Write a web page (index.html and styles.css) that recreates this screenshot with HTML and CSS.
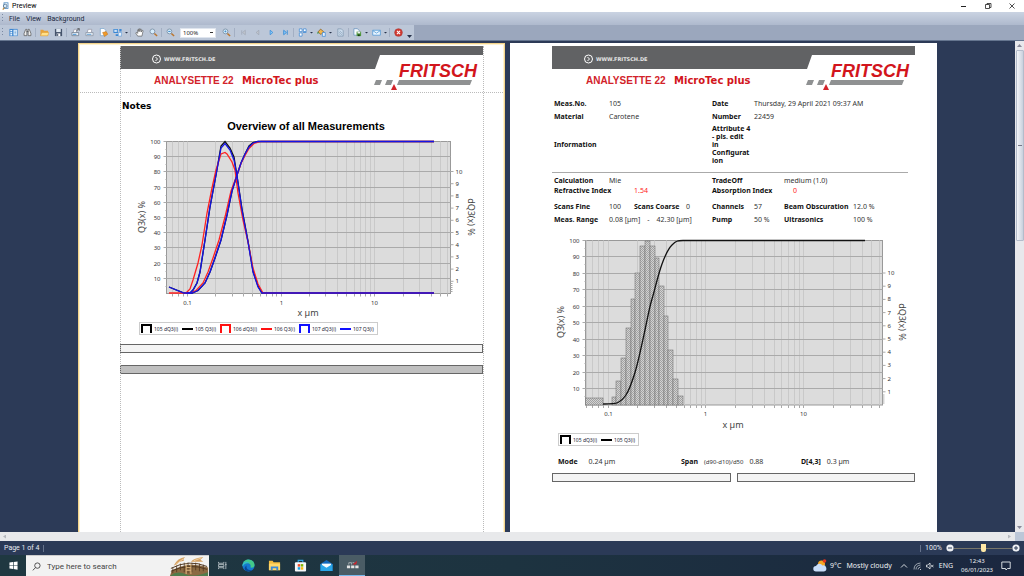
FILE: index.html
```html
<!DOCTYPE html>
<html lang="en">
<head>
<meta charset="utf-8">
<title>Preview</title>
<link rel="stylesheet" href="styles.css">
</head>
<body>
<header class="titlebar">
  <svg class="app-icon" viewBox="0 0 10 10"><rect x="2.500" y="1" width="5" height="7" fill="#fff" stroke="#4b8ac2"/><circle cx="4" cy="5" r="2.300" fill="#d8ecfa" stroke="#4c6f91"/><path d="M3 7 1 9.500" stroke="#c68e3b" stroke-width="1.500"/></svg>
  <h1 class="app-title">Preview</h1>
  <button class="win-btn" aria-label="Minimize"><svg viewBox="0 0 8 8"><path d="M1 4.500h5" stroke="#222"/></svg></button>
  <button class="win-btn" aria-label="Restore"><svg viewBox="0 0 8 8"><path d="M1.500 2.500h4v4h-4zM3 2.500v-1h4v4h-1.500" fill="none" stroke="#222" stroke-width=".8"/></svg></button>
  <button class="win-btn" aria-label="Close"><svg viewBox="0 0 8 8"><path d="m1.500 1.500 5 5m0-5-5 5" stroke="#222" stroke-width=".8"/></svg></button>
</header>

<nav class="menubar">
  <i class="grip"></i>
  <button class="menu">File</button><button class="menu">View</button><button class="menu">Background</button>
</nav>

<div class="toolrow">
  <div class="toolbar" role="toolbar" aria-label="Preview tools">
    <i class="grip"></i>
    <button class="tool" aria-label="Thumbnails"><svg viewBox="0 0 10 10"><rect x=".5" y="1" width="9" height="8" fill="#3f86cf"/><path d="M1.500 2.200h2v1.500h-2zm0 2.300h2V6h-2zm0 2.200h2v1.500h-2zM5 2h3.800v6.200H5z" fill="#e5f2fd"/><path d="M6 3.500h2M6 5h2M6 6.500h2" stroke="#5b99d5" stroke-width=".7"/></svg></button>
    <button class="tool" aria-label="Find"><svg viewBox="0 0 10 10"><path d="M3 1.500h1.300v7H1.200V6zM7 1.500H5.700v7h3.100V6z" fill="#eee" stroke="#555" stroke-width=".8"/><path d="M4 4h2" stroke="#555"/></svg></button>
    <i class="sep"></i>
    <button class="tool" aria-label="Open"><svg viewBox="0 0 10 10"><path d="M.5 2h3l1 1H9v5.500H.5z" fill="#e6a23c"/><path d="M2 5h8L8.500 8.700H.6z" fill="#ffe08a" stroke="#dc962c" stroke-width=".5"/></svg></button>
    <button class="tool" aria-label="Save"><svg viewBox="0 0 10 10"><path d="M1 1h8v8H1z" fill="#45536b"/><path d="M2.500 1h5v3.500h-5z" fill="#dfe7f0"/><path d="M3 6h4v3H3z" fill="#fff"/><path d="M3.500 6.500h1.200V9H3.500z" fill="#45536b"/></svg></button>
    <i class="sep"></i>
    <button class="tool" aria-label="Print options"><svg viewBox="0 0 10 10"><path d="m2.500 5 1-3.500h3L6 5" fill="#fff" stroke="#889" stroke-width=".7"/><path d="M1 5h7.500v3.500H1z" fill="#e8edf3" stroke="#5d6a7c" stroke-width=".7"/><path d="M6 3.500 9 .5M7 .8h2.200V3" stroke="#444" stroke-width=".8" fill="none"/><path d="M2 7h4" stroke="#2f88d2"/></svg></button>
    <button class="tool" aria-label="Print"><svg viewBox="0 0 10 10"><path d="m2.500 5 1-3.500h4L7 5" fill="#fff" stroke="#889" stroke-width=".7"/><path d="M1 5h8v3.500H1z" fill="#e8edf3" stroke="#7d8898" stroke-width=".7"/><path d="M2 7h5" stroke="#5297d0"/></svg></button>
    <button class="tool" aria-label="Page setup"><svg viewBox="0 0 10 10"><path d="M1.500.5h4l2 2v6h-6z" fill="#fff" stroke="#679bc9" stroke-width=".7"/><path d="m4 5 4-1 1.800 3L6 9.500z" fill="#f09a2a" stroke="#b86b15" stroke-width=".5"/></svg></button>
    <button class="tool" aria-label="Scale"><svg viewBox="0 0 10 10"><path d="M.5 1h5v4.500h-5zM7 1h2.500v3H7zM3 7h3v2H3z" fill="#3c88d4"/><path d="M1.200 2h3.500v2.500H1.200zM6 5h3.500v4H6z" fill="#e7f2fd" stroke="#3c88d4" stroke-width=".5"/></svg></button>
    <i class="drop"></i><i class="sep"></i>
    <button class="tool" aria-label="Hand tool"><svg viewBox="0 0 10 10"><path d="M3 9 .8 5.500 2 4.800 3 6V2h1.200v2V1h1.200v3l.3-2.700h1.200V4.500L8 2.500l1 .5-1.300 6z" fill="#fff" stroke="#555" stroke-width=".7"/></svg></button>
    <button class="tool" aria-label="Magnifier"><svg viewBox="0 0 10 10"><circle cx="3.800" cy="3.800" r="2.700" fill="#d6edfc" stroke="#7e93a8"/><path d="m6 6 3 3" stroke="#bc762c" stroke-width="1.600"/></svg></button>
    <i class="sep"></i>
    <button class="tool" aria-label="Zoom out"><svg viewBox="0 0 10 10"><circle cx="3.800" cy="3.800" r="2.700" fill="#d6edfc" stroke="#7e93a8"/><path d="M2.500 3.800h2.600" stroke="#287bc1"/><path d="m6 6 3 3" stroke="#bc762c" stroke-width="1.600"/></svg></button>
    <select class="zoom-select" aria-label="Zoom"><option>100%</option></select>
    <button class="tool" aria-label="Zoom in"><svg viewBox="0 0 10 10"><circle cx="3.800" cy="3.800" r="2.700" fill="#d6edfc" stroke="#7e93a8"/><path d="M2.700 3.800h2.200M3.800 2.700v2.200" stroke="#287bc1" stroke-width=".7"/><path d="m6 6 3 3" stroke="#bc762c" stroke-width="1.600"/></svg></button>
    <i class="sep"></i>
    <button class="tool" aria-label="First page" disabled><svg viewBox="0 0 10 10"><path d="M3 2.500v5M7 2.500v5L4 5z" fill="#c2c7cf" stroke="#9ba3af" stroke-width=".7"/></svg></button>
    <button class="tool" aria-label="Previous page" disabled><svg viewBox="0 0 10 10"><path d="M6.500 2.500v5L3.500 5z" fill="#c2c7cf" stroke="#9ba3af" stroke-width=".7"/></svg></button>
    <button class="tool" aria-label="Next page"><svg viewBox="0 0 10 10"><path d="M3.500 2.500v5l3-2.500z" fill="#8dcdfb" stroke="#2f87d5" stroke-width=".8"/></svg></button>
    <button class="tool" aria-label="Last page"><svg viewBox="0 0 10 10"><path d="M3 2.500v5L6 5zM7 2.500v5" fill="#8dcdfb" stroke="#2f87d5" stroke-width=".9"/></svg></button>
    <i class="sep"></i>
    <button class="tool" aria-label="Multiple pages"><svg viewBox="0 0 10 10"><path d="M1.500 1h3v3h-3zm4.500 0h3v3H6zM1.500 5.500h3V9h-3z" fill="#fff" stroke="#3b89d6" stroke-width=".8"/><path d="M5.300 4.800h4" stroke="#3b89d6"/></svg></button>
    <i class="drop"></i>
    <button class="tool" aria-label="Background colour"><svg viewBox="0 0 10 10"><path d="m1 4.500 3-3.300 3.500 3-3 3z" fill="#f4b74c" stroke="#7c5b25" stroke-width=".8"/><path d="M6 5h3.200v4.300H6z" fill="#e5f1fc" stroke="#3b89d6" stroke-width=".8"/><path d="M1 4.500v2" stroke="#2b9c45"/></svg></button>
    <i class="drop"></i>
    <button class="tool" aria-label="Watermark"><svg viewBox="0 0 10 10"><path d="M2 1h4l2 2v6H2z" fill="#ccdced" stroke="#7890a9" stroke-width=".7"/><path d="m3 4 4 4M3 6l2 2m-1-5 3 3" stroke="#7890a9" stroke-width=".6"/></svg></button>
    <i class="sep"></i>
    <button class="tool" aria-label="Export"><svg viewBox="0 0 10 10"><path d="M1 .8h4L7 3v5H1z" fill="#f6fbff" stroke="#5284b5" stroke-width=".7"/><path d="M4 4h5v5H4z" fill="#4d943b"/><path d="M5 4h3v2H5z" fill="#eee"/><path d="M5.500 7.200h2V9h-2z" fill="#163b12"/></svg></button>
    <i class="drop"></i>
    <button class="tool" aria-label="Send by e-mail"><svg viewBox="0 0 10 10"><path d="M.8 2.500h8.500v5.500H.8z" fill="#e9f5ff" stroke="#4693d4" stroke-width=".8"/><path d="m1 3 4 2.700L9 3" fill="none" stroke="#4693d4" stroke-width=".8"/></svg></button>
    <i class="drop"></i><i class="sep"></i>
    <button class="tool" aria-label="Close preview"><svg viewBox="0 0 10 10"><circle cx="5" cy="5" r="4.300" fill="#d23a32" stroke="#a63631" stroke-width=".6"/><path d="m3.300 3.300 3.400 3.400m0-3.400L3.300 6.700" stroke="#fff" stroke-width="1.200"/></svg></button>
    <i class="overflow"></i>
  </div>
</div>

<main class="workspace">
  <div class="canvas">
    <article class="page page-selected">
      <i class="guide guide-left"></i><i class="guide guide-right"></i><i class="guide guide-top"></i>
      <svg class="banner" viewBox="0 0 363 46">
        <path d="M0 0H363V9H260L255 23H0Z" fill="#616264"/>
        <circle cx="36.500" cy="13" r="4" fill="none" stroke="#fff"/><path d="m35.500 11 2 2-2 2" fill="none" stroke="#fff"/>
        <text class="site" x="44" y="15">WWW.FRITSCH.DE</text>
        <text class="model" x="34" y="38">ANALYSETTE 22</text>
        <text class="model-name" x="122" y="38">MicroTec plus</text>
        <text class="brand" x="279" y="31">FRITSCH</text>
        <path d="M279 34h73l-2 5h-73zM256 34h6l-2 5h-6zM267 34h6l-2 5h-6z" fill="#8f9192"/><path d="m274 38 3 6h-6z" fill="#d2232a"/>
      </svg>
      <h2 class="notes">Notes</h2>
      <svg class="chart chart-overview" id="overview" viewBox="120 116 363 206">
        <g class="plot"></g>
        <g class="curves">
          <path class="black" d="M169 287 184 293H190L193 290 197 283 200 272 205 240 210 207 216 175 221 146 225 141.500 230 148 234 157 237 176 242 209 248 241 253 271 258 286 262 293H434"/>
          <path class="black" d="M187 293H192L198 290.500 205 283 210 272 215 258 221 240 227 215 232 191 237 175 241 163 245 154 249 146 253 142.500 258 141.500H434"/>
          <path class="red" d="M169 293H186L190 289 193 280 198 263 202 245 207 213 212 188 216 170 221 154 225 152.500 227 154 232 162 235 170 238 193 243 220 248 242 253 268 258 284 263 293H434"/>
          <path class="red" d="M187 293H190L196 290.500 203 283 208 272 213 258 219 240 225.500 215 231 191 237 175 241 163.500 245 155.500 249 148.500 254 143.500 261 141.500H434"/>
          <path class="blue" d="M169 287 184 293H190L193 290 197 283 200 272 205 240 210 207 216 175 221 148 225 143.500 230 150 234 160 237 176 242 210 248 242 253 272 258 287 262 293H434"/>
          <path class="blue" d="M187 293H192L198 290.500 205 283 210 272 215 258 221 240 227 215 232 191 237 175 241 163 245 154 249 147 253 143 258 141.500H434"/>
        </g>
        <text class="chart-title" x="306" y="130">Overview of all Measurements</text>
        <text class="axis-title" x="308" y="316">x µm</text>
        <text class="axis-title" transform="translate(145 217) rotate(-90)">Q3(x) %</text>
        <text class="axis-title" transform="translate(468 217) rotate(90)">dQ3(x) %</text>
      </svg>
      <ul class="legend legend-overview">
        <li class="key"><i class="step"></i>105 dQ3(i)</li><li class="key"><i class="line"></i>105 Q3(i)</li>
        <li class="key"><i class="step is-red"></i>106 dQ3(i)</li><li class="key"><i class="line is-red"></i>106 Q3(i)</li>
        <li class="key"><i class="step is-blue"></i>107 dQ3(i)</li><li class="key"><i class="line is-blue"></i>107 Q3(i)</li>
      </ul>
      <div class="strip"></div>
      <div class="strip strip-dark"></div>
    </article>

    <article class="page">
      <svg class="banner" viewBox="0 0 363 46">
        <path d="M0 0H363V9H260L255 23H0Z" fill="#616264"/>
        <circle cx="36.500" cy="13" r="4" fill="none" stroke="#fff"/><path d="m35.500 11 2 2-2 2" fill="none" stroke="#fff"/>
        <text class="site" x="44" y="15">WWW.FRITSCH.DE</text>
        <text class="model" x="34" y="38">ANALYSETTE 22</text>
        <text class="model-name" x="122" y="38">MicroTec plus</text>
        <text class="brand" x="279" y="31">FRITSCH</text>
        <path d="M279 34h73l-2 5h-73zM256 34h6l-2 5h-6zM267 34h6l-2 5h-6z" fill="#8f9192"/><path d="m274 38 3 6h-6z" fill="#d2232a"/>
      </svg>
      <section class="fields fields-sample">
        <b>Meas.No.</b><span class="wide3">105</span><b>Date</b><span class="wide3">Thursday, 29 April 2021 09:37 AM</span>
        <b>Material</b><span class="wide3">Carotene</span><b>Number</b><span class="wide3">22459</span>
        <b class="wide4">Information</b><b class="attribute">Attribute 4<br>- pls. edit<br>in<br>Configurat<br>ion</b>
      </section>
      <section class="fields fields-optics">
        <b>Calculation</b><span class="wide3">Mie</span><b class="wide2">TradeOff</b><span class="wide2">medium (1.0)</span>
        <b class="wide2">Refractive Index</b><span class="wide2 is-value-red">1.54</span><b class="wide2">Absorption Index</b><span class="wide2 is-value-red indent">0</span>
      </section>
      <section class="fields fields-scan">
        <b>Scans Fine</b><span>100</span><b>Scans Coarse</b><span>0</span><b>Channels</b><span>57</span><b>Beam Obscuration</b><span>12.0 %</span>
        <b>Meas. Range</b><span class="wide3 range"><span>0.08 [µm]</span><span>-</span><span>42.30 [µm]</span></span><b>Pump</b><span>50 %</span><b>Ultrasonics</b><span>100 %</span>
      </section>
      <svg class="chart chart-single" id="single" viewBox="552 232 363 200">
        <defs><pattern id="mesh" width="2" height="2" patternUnits="userSpaceOnUse"><rect width="2" height="2" fill="#d2d2d2"/><path d="M0 0h1v1H0zM1 1h1v1H1z" fill="#a2a2a2"/></pattern></defs>
        <g class="plot"></g>
        <g class="bars"></g>
        <g class="curves"><path class="black" d="M603 404C612 404 615 404 618 402.500S624 398 626 395 632 382 635 372.500 642 344 645 330 649 309 652 299 658 275 662 264 668 249 672 245 677 240.500 683 240.500H865"/></g>
        <text class="axis-title" x="733" y="428">x µm</text>
        <text class="axis-title" transform="translate(564 322) rotate(-90)">Q3(x) %</text>
        <text class="axis-title" transform="translate(899 322) rotate(90)">dQ3(x) %</text>
      </svg>
      <ul class="legend legend-single">
        <li class="key"><i class="step"></i>105 dQ3(i)</li><li class="key"><i class="line"></i>105 Q3(i)</li>
      </ul>
      <div class="summary">
        <div class="stat stat-mode"><b>Mode</b><span>0.24 µm</span></div>
        <div class="stat"><b>Span</b><small>(d90-d10)/d50</small><span>0.88</span></div>
        <div class="stat"><b>D[4,3]</b><span>0.3 µm</span></div>
      </div>
      <div class="pair"><div class="strip"></div><div class="strip"></div></div>
    </article>
  </div>
  <div class="vscroll"><i class="arrow-up"></i><i class="thumb"></i><i class="arrow-down"></i></div>
</main>
<div class="hscroll"><i class="arrow-left"></i><i class="arrow-right"></i><i class="corner"></i></div>

<footer class="statusbar">
  <span class="page-count">Page 1 of 4</span>
  <label class="zoom-label" for="zoom">100%</label>
  <button class="round" aria-label="Zoom out"><svg viewBox="0 0 8 8"><circle cx="4" cy="4" r="3.600" fill="#eef0f4"/><path d="M2 4h4" stroke="#2b3a57"/></svg></button>
  <input class="zoom-range" id="zoom" type="range" min="0" max="100" value="50">
  <button class="round" aria-label="Zoom in"><svg viewBox="0 0 8 8"><circle cx="4" cy="4" r="3.600" fill="#eef0f4"/><path d="M2 4h4M4 2v4" stroke="#2b3a57"/></svg></button>
</footer>

<div class="taskbar">
  <button class="task" aria-label="Start"><svg viewBox="0 0 10 10"><path d="M.5 1.700 4.500 1.200V4.700H.5zM5.200 1.100 9.500.5V4.700H5.200zM.5 5.400H4.500V8.900L.5 8.400zM5.200 5.400H9.500V9.600L5.200 9z" fill="#fff"/></svg></button>
  <div class="search">
    <svg class="lens" viewBox="0 0 10 10"><circle cx="6" cy="4" r="3" fill="none" stroke="#333" stroke-width=".9"/><path d="M4 6.200.8 9.300" stroke="#333" stroke-width=".9"/></svg>
    <input class="search-input" type="text" aria-label="Search" placeholder="Type here to search">
    <svg class="scene" viewBox="0 0 40 21"><path d="M0 21 2 15Q20 5 40 12V21Z" fill="#8b6a42"/><path d="M0 21Q8 15 16 19T40 17V21Z" fill="#4f7d4c"/><path d="M1 13Q20 3 39 11M1 16Q20 7 39 14" fill="none" stroke="#4f3620"/><path d="M3 12v6M7 10v7M11 8v7M15 7v10M19 7v11M23 7v10M27 7v8M31 8v8M35 9v7" stroke="#4f3620" stroke-width=".8"/><path d="M17 8v11m5-11v11M17 12h5m-5 3h5" stroke="#dfb77f"/><path d="M4 10Q8 2 16 1 13 4 15 5L10 6 7 9M22 6Q25 2 35 1L32 4 35 6 27 6" fill="#d4a163"/><path d="M6 9 14 3M25 5 33 2" stroke="#f1d0a0"/></svg>
  </div>
  <button class="task" aria-label="Task view"><svg viewBox="0 0 10 10"><path d="M.5 1v1.500h6V1M.5 9V7.500h6V9M.5 4h6v2.200h-6zM8.700 1v8M8 4h1.500" fill="none" stroke="#d7dde1" stroke-width=".8"/></svg></button>
  <button class="task" aria-label="Edge"><svg class="big" viewBox="0 0 14 14"><circle cx="7" cy="7" r="6.500" fill="#1578cf"/><path d="M.7 6C1.500 2 4 .5 7 .5 11 .5 13.500 3.500 13.500 6.500 13.500 9 11 10 9 9 10 7 9 4.500 6 4.500 3 4.500 1.500 6 .7 8Z" fill="#43c98a"/><path d="M.7 6C2 2.500 6 2 9 4 6 3 2 4.500 .7 8Z" fill="#2eb6df"/><path d="M5 7C4 11 8 13 11.500 11.500 9.500 13.500 6 14 3.500 12 2 10.500 3 8 5 7Z" fill="#0a4796"/></svg></button>
  <button class="task" aria-label="File Explorer"><svg class="big" viewBox="0 0 14 14"><path d="M1 2h4l1 1.500h7V12H1z" fill="#f4bd3f"/><path d="M1 5h12v7H1z" fill="#ffd769"/><path d="M3 12V8h8v4H9v-2H5v2z" fill="#3a89d8"/></svg></button>
  <button class="task" aria-label="Store"><svg class="big" viewBox="0 0 14 14"><path d="M4.500 4V1.500h5V4" fill="none" stroke="#31a6e6" stroke-width="1.200"/><rect x="1" y="3.500" width="12" height="10" rx="1" fill="#f6f8fa"/><path d="M4 5.500h2.700v2.700H4z" fill="#ee4e2b"/><path d="M7.300 5.500H10v2.700H7.300z" fill="#7eb900"/><path d="M4 8.800h2.700v2.700H4z" fill="#1ba1e2"/><path d="M7.300 8.800H10v2.700H7.300z" fill="#fdb813"/></svg></button>
  <button class="task" aria-label="Mail"><svg class="big" viewBox="0 0 14 14"><path d="m.5 5.500 6.500-4.500 6.500 4.500V13H.5z" fill="#1168bd"/><path d="M2 5h10v5H2z" fill="#f4fbff"/><path d="M.5 5.500 7 9.500l6.500-4V13H.5z" fill="#28a5e8"/></svg></button>
  <button class="task task-active" aria-label="Measurement software"><svg class="big" viewBox="0 0 14 14"><path d="M1 7h3.500v3H1zm4.500 0H9v3H5.500zm4.500 0h3.500v3H10z" fill="#e4e4e4"/><path d="M3 6V4h3v2m1-2h2" stroke="#a9b0b3" fill="none"/><path d="m7 6 5-4-1 4z" fill="#d0232b"/></svg></button>
  <div class="tray">
    <svg class="weather" viewBox="0 0 14 13"><circle cx="8.500" cy="5" r="3.500" fill="#f5a623"/><circle cx="11.500" cy="2" r="1.800" fill="#e0331f"/><path d="M3 12.500a2.700 2.700 0 0 1 0-5.400A3.600 3.600 0 0 1 9.500 6.500 3 3 0 0 1 11 12.500z" fill="#c9defa"/></svg>
    <span class="forecast"><span>9°C</span><span>Mostly cloudy</span></span>
    <svg class="tray-icon" viewBox="0 0 8 8"><path d="m1 5.500 3-3 3 3" fill="none" stroke="#e7ebee" stroke-width=".9"/></svg>
    <svg class="tray-icon" viewBox="0 0 8 8"><path d="M1 7.500Q1 1.500 7.500 1M3 7.500Q3 3.500 7.500 3M5 7.500Q5 5.500 7.500 5" fill="none" stroke="#bcc4cb" stroke-width=".8"/><path d="M7 7.500h.8" stroke="#fff"/></svg>
    <svg class="tray-icon" viewBox="0 0 8 8"><path d="M.5 3h1.300L4 1v6L1.800 5H.5zM5 2.800l2.500 2.500m0-2.500L5 5.300" fill="none" stroke="#e7ebee" stroke-width=".8"/></svg>
    <span class="lang">ENG</span>
    <time class="clock">12:43<br>06/01/2023</time>
    <svg class="notify" viewBox="0 0 10 10"><path d="M.8 1h8.400v6.500H6.500L5 9 4.500 7.500H.8z" fill="none" stroke="#e7ebee" stroke-width=".9"/></svg>
  </div>
</div>
<script src="charts.js"></script>
</body>
</html>
```

FILE: styles.css
```css
* { box-sizing: border-box; }
body {
  margin: 0; height: 100vh; display: flex; flex-direction: column; overflow: hidden;
  font-family: Roboto, "Noto Sans", sans-serif; font-size: 7px; color: #222; background: #2c3a57;
}
button { border: 0; padding: 0; background: none; font: inherit; color: inherit; display: flex; align-items: center; justify-content: center; }
svg { display: block; }
ul { list-style: none; margin: 0; padding: 0; }

.titlebar { height: 12px; flex: none; display: flex; align-items: center; background: #fff; }
.app-icon { width: 8px; height: 8px; margin: 0 2px; }
.app-title { margin: 0; font-size: 7px; font-weight: 400; flex: 1; color: #000; }
.win-btn { width: 24px; height: 12px; }
.win-btn svg { width: 8px; height: 8px; }

.menubar { height: 13px; flex: none; display: flex; align-items: center; padding-left: 2px; background: linear-gradient(#cad3e2, #aeb9cd); }
.grip { width: 4px; height: 9px; background: repeating-linear-gradient(#7b8aa3 0 1px, transparent 1px 3px) 0 0 / 1px 100% no-repeat; }
.menu { height: 13px; padding: 0 3px; color: #1b293e; }

.toolrow { height: 16px; flex: none; background: #9ba7bd; border-bottom: 1px solid #65758f; }
.toolbar { width: max-content; height: 15px; display: flex; align-items: center; padding-left: 2px; background: #bcc7d8; }
.tool { width: 14px; height: 14px; }
.tool svg { width: 9px; height: 9px; }
.sep { width: 1px; height: 9px; margin: 0 1px; background: #a3afc3; }
.drop { width: 5px; height: 2px; background: #27324a; clip-path: polygon(10% 0, 90% 0, 50% 100%); }
.zoom-select {
  width: 36px; height: 10px; margin: 0 3px; padding: 0 2px; appearance: none; border: 1px solid #dfe5ee; border-radius: 0;
  font: 6px "Noto Sans", sans-serif; color: #222;
  background: #fff linear-gradient(#333, #333) right 2px center / 3px 1px no-repeat;
}
.overflow { align-self: end; width: 5px; height: 3px; margin: 0 2px 2px; background: #27324a; clip-path: polygon(0 0, 100% 0, 50% 100%); }

.workspace { flex: 1; min-height: 0; display: flex; }
.canvas { flex: 1; min-width: 0; overflow: hidden; display: flex; justify-content: center; gap: 5px; padding-top: 2px; background: #2c3a57; }
.page { position: relative; width: 427px; height: 603px; flex: none; display: flex; flex-direction: column; padding: 3px 22px 0 42px; background: #fff; font-family: "Noto Sans", sans-serif; }
.page-selected { box-shadow: inset 0 0 0 1px #f4d48c, inset 0 0 0 2px #fff3d0; }
.guide { position: absolute; border: 0 dotted #bbb; }
.guide-left { left: 42px; top: 3px; bottom: 0; border-left-width: 1px; }
.guide-right { right: 21px; top: 3px; bottom: 0; border-left-width: 1px; }
.guide-top { top: 49px; left: 2px; right: 2px; border-top-width: 1px; }

.banner { width: 100%; flex: none; }
.site { font: bold 5px "DejaVu Sans", sans-serif; fill: #e6e6e6; }
.model { font: bold 10px "Liberation Sans", sans-serif; fill: #d2232a; }
.model-name { font: bold 10px "DejaVu Sans", sans-serif; fill: #d2151c; }
.brand { font: italic bold 18px "Liberation Sans", sans-serif; fill: #d2151c; }

.notes { margin: 8px 0 0 2px; font: bold 9px/12px "DejaVu Sans", sans-serif; color: #000; }
.chart { width: 100%; flex: none; }
.chart-overview { margin-top: 4px; }
.chart-single { margin-top: 6px; }
.chart-title { font: bold 11px "Liberation Sans", sans-serif; text-anchor: middle; fill: #000; }
.axis-title { font: 9px "Noto Sans", sans-serif; text-anchor: middle; fill: #444; }
.tick-label { font: 6px "Noto Sans", sans-serif; fill: #333; }
.anchor-end { text-anchor: end; }
.anchor-mid { text-anchor: middle; }
.area { fill: #dcdcdc; stroke: #999; }
.grid-y { stroke: #aaa; }
.grid-x { stroke: #c9c9c9; }
.tick { stroke: #aaa; }
.bar { fill: url(#mesh); stroke: #777; stroke-width: .6; }
.curves path { fill: none; stroke-width: 1.3; }
.black { stroke: #111; }
.red { stroke: #f22; }
.blue { stroke: #1414e6; }

.legend { display: flex; gap: 4px; width: max-content; height: 13px; align-items: center; padding: 0 3px 0 1px; border: 1px solid #ccc; font-size: 5px; color: #223; }
.legend-overview { margin-left: 19px; }
.legend-single { margin: 1px 0 0 6px; }
.key { display: flex; align-items: center; gap: 2px; }
.step { width: 11px; height: 9px; border: 2px solid #000; border-bottom: 0; }
.line { width: 11px; height: 2px; background: #000; }
.step.is-red { border-color: #f11; }
.step.is-blue { border-color: #11f; }
.line.is-red { background: #f11; }
.line.is-blue { background: #11f; }
.strip { height: 9px; margin-top: 9px; border: 1px solid #666; background: #f4f4f4; }
.strip-dark { margin-top: 12px; background: #bfbfbf; }

.fields { display: grid; grid-template-columns: 55px 25px 52px 26px 42px 30px 69px 1fr; align-items: center; padding-left: 2px; white-space: nowrap; color: #333; line-height: 8px; }
.fields b, .summary b { color: #111; }
.wide2 { grid-column: span 2; }
.wide3 { grid-column: span 3; }
.wide4 { grid-column: span 4; }
.fields-sample { margin-top: 5px; grid-template-rows: 13px 13px 43px; padding-bottom: 6px; }
.fields-optics { grid-template-rows: 10px 10px; padding-top: 3px; border-top: 1px solid #aaa; margin-right: 7px; }
.fields-scan { margin-top: 4px; grid-template-rows: 13px 13px; }
.fields .is-value-red { color: #f22; }
.indent { padding-left: 9px; }
.range { display: flex; gap: 7px; }

.summary { display: grid; grid-template-columns: 123px 120px 1fr; padding-left: 6px; margin-top: 11px; color: #333; line-height: 10px; }
.stat { display: flex; gap: 6px; align-items: baseline; white-space: nowrap; }
.stat-mode { gap: 11px; }
.summary small { font-size: 6px; }
.pair { display: grid; grid-template-columns: 1fr 1fr; gap: 6px; }
.pair .strip { margin-top: 6px; }

.vscroll { width: 9px; flex: none; display: flex; flex-direction: column; align-items: center; background: #e8e8ec; }
.arrow-up, .arrow-down { width: 5px; height: 3px; margin: 3px 0; background: #889; clip-path: polygon(50% 0, 100% 100%, 0 100%); }
.arrow-down { margin-top: auto; clip-path: polygon(0 0, 100% 0, 50% 100%); }
.thumb { width: 8px; height: 191px; border: 1px solid #b4bccb; border-radius: 1px; background: linear-gradient(#778, #778) center / 4px 1px no-repeat, linear-gradient(90deg, #f3f5f9, #c9d0dd); }
.hscroll { height: 9px; flex: none; display: flex; align-items: center; background: #e8e9eb; padding-left: 3px; }
.arrow-left, .arrow-right { width: 3px; height: 4px; background: #b5b8be; clip-path: polygon(0 50%, 100% 0, 100% 100%); }
.arrow-right { margin: 0 4px 0 auto; clip-path: polygon(0 0, 100% 50%, 0 100%); }
.corner { width: 9px; height: 9px; background: #bcc7d8; }

.statusbar { height: 14px; flex: none; display: flex; align-items: center; padding: 0 4px; color: #e6eaf2; background: #2b3a57; font-size: 7px; }
.page-count { padding-right: 4px; margin-right: auto; border-right: 1px solid #66738c; line-height: 7px; }
.zoom-label { padding: 0 4px; border-left: 1px solid #66738c; line-height: 7px; }
.round { width: 8px; height: 8px; }
.round svg { width: 8px; height: 8px; }
.zoom-range { width: 58px; height: 10px; margin: 0; appearance: none; background: linear-gradient(#77756a, #77756a) center / 100% 1px no-repeat; }
.zoom-range::-webkit-slider-thumb { appearance: none; width: 5px; height: 8px; background: #ffe8a6; border-radius: 0 0 2px 2px; }

.taskbar { height: 21px; flex: none; display: flex; align-items: stretch; color: #eef1f4; background: linear-gradient(90deg, #1f3841, #1d3340 50%, #1b2740); font-size: 8px; }
.task { width: 26px; }
.task svg { width: 9px; height: 9px; }
.task .big { width: 13px; height: 13px; }
.task-active { background: #4a5c65; border-bottom: 1px solid #76b9ed; }
.search { width: 183px; display: flex; align-items: center; background: #f2f2f2; padding-left: 6px; border-top: 1px solid #ccc; }
.lens { width: 9px; height: 9px; }
.search-input { flex: 1; min-width: 0; border: 0; padding: 0 0 0 6px; background: none; font: 8px Roboto, sans-serif; }
.search-input::placeholder { color: #444; }
.scene { width: 40px; height: 20px; }
.tray { margin-left: auto; display: flex; align-items: center; gap: 5px; padding-right: 13px; white-space: nowrap; }
.weather { width: 14px; height: 13px; }
.forecast { display: flex; gap: 5px; margin-right: 3px; margin-left: -2px; font: 7px "Noto Sans", sans-serif; }
.tray-icon { width: 8px; height: 8px; }
.lang { font: 7px "Noto Sans", sans-serif; }
.clock { font: 6px/9px "Noto Sans", sans-serif; text-align: center; padding: 0 3px; }
.notify { width: 10px; height: 10px; }
```

FILE: charts.js
```javascript
const NS = "http://www.w3.org/2000/svg";

function add(parent, tag, attrs, text) {
  const node = document.createElementNS(NS, tag);
  for (const key in attrs) node.setAttribute(key, attrs[key]);
  if (text !== undefined) node.textContent = text;
  parent.appendChild(node);
}

function line(parent, cls, x1, y1, x2, y2) {
  add(parent, "line", { class: cls, x1, y1, x2, y2 });
}

// Draws the log-scaled x axis, the Q3 axis on the left and the dQ3 axis on the right.
function drawPlot(id, o) {
  const g = document.querySelector("#" + id + " .plot");
  const xOf = v => Math.round(o.x01 + o.decade * Math.log10(v / 0.1)) + 0.5;
  add(g, "rect", { class: "area", x: o.left, y: o.top, width: o.right - o.left, height: o.bottom - o.top });
  for (const base of [0.01, 0.1, 1, 10]) {
    for (let k = 1; k < 10; k++) {
      const x = xOf(base * k);
      if (x <= o.left || x >= o.right) continue;
      line(g, "grid-x", x, o.top, x, o.bottom);
      line(g, "tick", x, o.bottom, x, o.bottom + 3);
    }
  }
  for (let p = 10; p <= 100; p += 10) {
    const y = Math.floor(o.bottom - (o.bottom - o.top) * p / 100) + 0.5;
    if (p < 100) line(g, "grid-y", o.left, y, o.right, y);
    line(g, "tick", o.left - 3, y, o.left, y);
    add(g, "text", { class: "tick-label anchor-end", x: o.left - 6, y: y + 2 }, p);
    line(g, "tick", o.left - 1, y + 8, o.left, y + 8);
  }
  for (let n = 1; n <= 10; n++) {
    const y = o.bottom - o.unit * n;
    line(g, "tick", o.right, y, o.right + 3, y);
    add(g, "text", { class: "tick-label", x: o.right + 5, y: y + 2 }, n);
  }
  for (let n = 1; n <= 5; n++) {
    line(g, "tick", o.right, o.bottom - n * 2, o.right + 2, o.bottom - n * 2);
  }
  for (const v of [0.1, 1, 10]) {
    add(g, "text", { class: "tick-label anchor-mid", x: xOf(v), y: o.bottom + 11 }, v);
  }
}

drawPlot("overview", { left: 166.5, right: 450.5, top: 141.5, bottom: 293.5, x01: 187, decade: 93.7, unit: 12.2 });
drawPlot("single", { left: 585.5, right: 882.5, top: 240.5, bottom: 405, x01: 607.5, decade: 97.8, unit: 13.2 });

const bars = document.querySelector("#single .bars");
[[585.5, 603, 398], [612, 616, 397], [616, 621, 381], [621, 626, 358], [626, 631, 328], [631, 635, 299],
 [635, 640, 273], [640, 645, 246], [645, 650, 241], [650, 655, 246], [655, 659, 258], [659, 664, 286],
 [664, 668, 316], [668, 673, 350], [673, 678, 379], [678, 683, 396]].forEach(([a, b, top]) => {
  add(bars, "rect", { class: "bar", x: a, y: top, width: b - a, height: 405 - top });
});
```
